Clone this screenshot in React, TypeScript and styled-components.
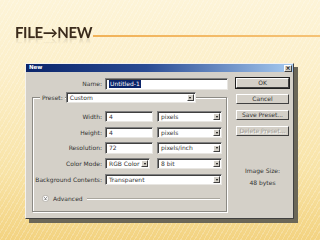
import React from "react";
import styled, { createGlobalStyle } from "styled-components";

const GlobalStyle = createGlobalStyle`
  html, body { margin: 0; padding: 0; }
  body { width: 320px; height: 240px; overflow: hidden; }
  * { box-sizing: border-box; }
`;

const Slide = styled.div`
  width: 320px;
  height: 240px;
  overflow: hidden;
  background:
    repeating-linear-gradient(120deg, rgba(255, 255, 255, 0.22) 0 1px, transparent 1px 4px),
    linear-gradient(180deg, #fdf4d8 0%, #fcefc9 30%, #f8e3a6 72%, #f3d381 100%);
`;

const Header = styled.header`
  height: 63px;
  display: flex;
  align-items: flex-start;
  padding-top: 24px;
`;

const Title = styled.h1`
  margin: 0 0 0 15px;
  font: 700 15px/16px Lato, "DejaVu Sans", sans-serif;
  letter-spacing: -0.4px;
  color: #3b2b1c;
  white-space: nowrap;
  -webkit-box-reflect: below -4px linear-gradient(transparent 50%, rgba(255, 255, 255, 0.2));
`;

const Rule = styled.div`
  flex: 1;
  height: 1.5px;
  margin: 11px 0 0 1px;
  background: linear-gradient(90deg, #f1b258, #f5c275);
`;

const Window = styled.div`
  margin-left: 25px;
  width: 269px;
  height: 156px;
  background: #d4d0c8;
  border: 1px solid;
  border-color: #f4f2ee #404040 #404040 #f4f2ee;
  box-shadow: 4px 4px 0 #6b6758;
  display: flex;
  flex-direction: column;
  font: 6px/1 "DejaVu Sans", sans-serif;
  color: #333;
`;

const TitleBar = styled.div`
  height: 8px;
  display: flex;
  align-items: center;
  justify-content: space-between;
  padding: 0 1px 0 3px;
  background: linear-gradient(90deg, #0a246a 0%, #2a4b93 45%, #a6caf0 100%);
`;

const TitleText = styled.span`
  color: #fff;
  font-weight: 700;
  font-size: 5.5px;
`;

const CloseBox = styled.div`
  width: 8px;
  height: 7px;
  background: #d4d0c8;
  border: 1px solid;
  border-color: #fff #404040 #404040 #fff;
  display: flex;
  align-items: center;
  justify-content: center;
  font: 700 6px/1 "DejaVu Sans", sans-serif;
  color: #000;
`;

const Body = styled.div`
  flex: 1;
  display: flex;
`;

const LeftCol = styled.div`
  width: 203px;
  display: flex;
  flex-direction: column;
`;

const RightCol = styled.div`
  width: 53px;
  margin-left: 7px;
  display: flex;
  flex-direction: column;
  align-items: stretch;
`;

const Row = styled.div<{ $top: number; $h?: number }>`
  display: flex;
  align-items: center;
  margin-top: ${({ $top }) => $top}px;
  height: ${({ $h }) => $h ?? 11}px;
`;

const Label = styled.span<{ $w: number }>`
  width: ${({ $w }) => $w}px;
  margin-right: 3px;
  text-align: right;
  white-space: nowrap;
`;

const Field = styled.div<{ $w: number }>`
  width: ${({ $w }) => $w}px;
  height: 100%;
  background: #fff;
  border: 1px solid;
  border-color: #808080 #e8e6e2 #e8e6e2 #808080;
  box-shadow: inset 1px 1px 0 #404040;
  display: flex;
  align-items: center;
  padding-left: 3px;
  white-space: nowrap;
  overflow: hidden;
`;

const SelectField = styled(Field)`
  justify-content: space-between;
  padding-right: 1px;
`;

const Arrow = styled.div`
  width: 7px;
  height: 7px;
  flex: none;
  background: #d4d0c8;
  border: 1px solid;
  border-color: #fff #404040 #404040 #fff;
  display: flex;
  align-items: center;
  justify-content: center;
  &::after {
    content: "";
    border-left: 1.5px solid transparent;
    border-right: 1.5px solid transparent;
    border-top: 2px solid #000;
  }
`;

const Selected = styled.span`
  background: #0a246a;
  color: #fff;
  padding: 1px 1px;
`;

const Gap = styled.div<{ $w: number }>`
  width: ${({ $w }) => $w}px;
`;

const Group = styled.div`
  margin: 7px 0 0 6px;
  width: 195px;
  height: 115px;
  border: 1px solid #8c8a84;
  box-shadow: inset 1px 1px 0 #fff, 1px 1px 0 #fff;
  display: flex;
  flex-direction: column;
`;

const LegendRow = styled.div`
  display: flex;
  align-items: center;
  height: 11px;
  margin-top: -6px;
  padding-left: 7px;
`;

const Legend = styled.span`
  background: #d4d0c8;
  padding: 0 2px;
  margin-right: 1px;
  align-self: stretch;
  display: flex;
  align-items: center;
`;

const AdvancedRow = styled.div`
  display: flex;
  align-items: center;
  height: 7px;
  margin-top: 10px;
  padding-left: 9px;
`;

const Toggle = styled.svg`
  width: 7px;
  height: 7px;
  margin-right: 4px;
  flex: none;
`;

const Line = styled.div`
  flex: 1;
  height: 1px;
  margin: 0 6px 0 4px;
  background: #a9a69e;
  box-shadow: 0 1px 0 #fff;
`;

const Button = styled.div<{ $default?: boolean; $disabled?: boolean; $top: number }>`
  height: 10px;
  margin-top: ${({ $top }) => $top}px;
  background: #d4d0c8;
  border: 1px solid;
  border-color: #fff #404040 #404040 #fff;
  outline: ${({ $default }) => ($default ? "1px solid #202020" : "none")};
  display: flex;
  align-items: center;
  justify-content: center;
  color: ${({ $disabled }) => ($disabled ? "#a09d96" : "#333")};
  text-shadow: ${({ $disabled }) => ($disabled ? "1px 1px 0 #fff" : "none")};
  white-space: nowrap;
`;

const SizeText = styled.div<{ $top: number }>`
  margin-top: ${({ $top }) => $top}px;
  text-align: center;
  white-space: nowrap;
`;

const Select = ({ w, value }: { w: number; value: string }) => (
  <SelectField $w={w}>
    <span>{value}</span>
    <Arrow />
  </SelectField>
);

export default function App() {
  return (
    <Slide>
      <GlobalStyle />
      <Header>
        <Title>FILE→NEW</Title>
        <Rule />
      </Header>
      <Window>
        <TitleBar>
          <TitleText>New</TitleText>
          <CloseBox>×</CloseBox>
        </TitleBar>
        <Body>
          <LeftCol>
            <Row $top={6} $h={12}>
              <Label $w={76}>Name:</Label>
              <Field $w={123}>
                <Selected>Untitled-1</Selected>
              </Field>
            </Row>
            <Group>
              <LegendRow>
                <Legend>Preset:</Legend>
                <Select w={130} value="Custom" />
              </LegendRow>
              <Row $top={8}>
                <Label $w={69}>Width:</Label>
                <Field $w={48}>4</Field>
                <Gap $w={4} />
                <Select w={65} value="pixels" />
              </Row>
              <Row $top={5}>
                <Label $w={69}>Height:</Label>
                <Field $w={48}>4</Field>
                <Gap $w={4} />
                <Select w={65} value="pixels" />
              </Row>
              <Row $top={4} $h={12}>
                <Label $w={69}>Resolution:</Label>
                <Field $w={48}>72</Field>
                <Gap $w={4} />
                <Select w={65} value="pixels/inch" />
              </Row>
              <Row $top={4}>
                <Label $w={69}>Color Mode:</Label>
                <Select w={45} value="RGB Color" />
                <Gap $w={7} />
                <Select w={65} value="8 bit" />
              </Row>
              <Row $top={5}>
                <Label $w={69}>Background Contents:</Label>
                <Select w={117} value="Transparent" />
              </Row>
              <AdvancedRow>
                <Toggle viewBox="0 0 14 14">
                  <circle cx="7" cy="7" r="6.2" fill="#fff" stroke="#9a978f" strokeWidth="1.2" />
                  <path d="M4.5 4.5 L7 7 L9.5 4.5 M4.5 7.5 L7 10 L9.5 7.5" fill="none" stroke="#333" strokeWidth="1.3" />
                </Toggle>
                <span>Advanced</span>
                <Line />
              </AdvancedRow>
            </Group>
          </LeftCol>
          <RightCol>
            <Button $top={6} $default>OK</Button>
            <Button $top={6}>Cancel</Button>
            <Button $top={6}>Save Preset...</Button>
            <Button $top={6} $disabled>Delete Preset...</Button>
            <SizeText $top={32}>Image Size:</SizeText>
            <SizeText $top={6}>48 bytes</SizeText>
          </RightCol>
        </Body>
      </Window>
    </Slide>
  );
}
